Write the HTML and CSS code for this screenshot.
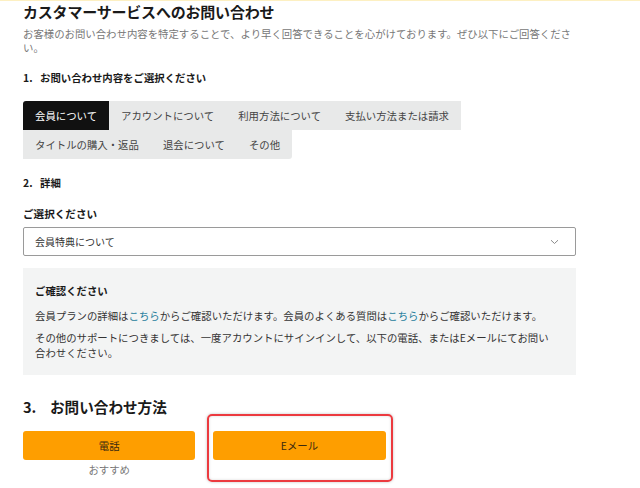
FILE: index.html
```html
<!DOCTYPE html>
<html lang="ja">
<head>
<meta charset="utf-8">
<title>カスタマーサービスへのお問い合わせ</title>
<link rel="stylesheet" href="styles.css">
</head>
<body>
<div class="topline"></div>
<main class="page">
  <h1 class="title">カスタマーサービスへのお問い合わせ</h1>
  <p class="lead">お客様のお問い合わせ内容を特定することで、より早く回答できることを心がけております。ぜひ以下にご回答ください。</p>

  <h2 class="step"><span class="num">1.</span>お問い合わせ内容をご選択ください</h2>
  <div class="chips">
    <span class="chip active">会員について</span>
    <span class="chip">アカウントについて</span>
    <span class="chip">利用方法について</span>
    <span class="chip">支払い方法または請求</span>
    <span class="chip">タイトルの購入・返品</span>
    <span class="chip">退会について</span>
    <span class="chip last">その他</span>
  </div>

  <h2 class="step step2"><span class="num">2.</span>詳細</h2>
  <div class="label">ご選択ください</div>
  <div class="select">
    <span>会員特典について</span>
    <svg class="chev" width="9" height="6" viewBox="0 0 9 6"><path d="M1 1.2 L4.5 4.5 L8 1.2" fill="none" stroke="#8a8a8a" stroke-width="1"/></svg>
  </div>

  <section class="notice">
    <div class="notice-title">ご確認ください</div>
    <p class="notice-p">会員プランの詳細は<a class="link">こちら</a>からご確認いただけます。会員のよくある質問は<a class="link">こちら</a>からご確認いただけます。</p>
    <p class="notice-p p2">その他のサポートにつきましては、一度アカウントにサインインして、以下の電話、またはEメールにてお問い合わせください。</p>
  </section>

  <h2 class="method"><span class="mnum">3.</span>お問い合わせ方法</h2>
  <div class="buttons">
    <div class="col">
      <div class="btn">電話</div>
      <div class="rec">おすすめ</div>
    </div>
    <div class="col highlighted">
      <div class="btn">Eメール</div>
      <div class="hl"></div>
    </div>
  </div>
</main>
</body>
</html>
```
FILE: styles.css
```css
* { box-sizing: border-box; }
html, body { margin: 0; padding: 0; background: #fff; }
body {
  font-family: "Noto Sans CJK JP", "Noto Sans", sans-serif;
  color: #222;
  width: 640px;
  height: 488px;
  overflow: hidden;
}
.topline { height: 1px; background: #fdf0c2; }
.page {
  width: 576px;
  padding-left: 23px;
}
.title {
  margin: 1px 0 0;
  font-size: 15px;
  line-height: 20px;
  font-weight: 700;
  color: #1a1a1a;
  letter-spacing: -0.2px;
}
.lead {
  margin: 5px 0 0;
  font-size: 10.4px;
  line-height: 14px;
  color: #777;
}
.step {
  margin: 16px 0 0;
  font-size: 10.4px;
  line-height: 14px;
  font-weight: 700;
  color: #1a1a1a;
  display: flex;
}
.step .num { width: 17px; }
.chips {
  display: flex;
  flex-wrap: wrap;
  width: 440px;
  margin-top: 16px;
}
.chip {
  background: #e8e9e9;
  color: #444;
  font-size: 10.4px;
  line-height: 13px;
  padding: 8px 12px;
  white-space: nowrap;
}
.chip.active {
  background: #111;
  color: #fff;
  border-radius: 3px 0 0 0;
}
.chip.last { border-radius: 0 0 3px 0; }
.step2 { margin-top: 17px; }
.label {
  margin-top: 17px;
  font-size: 10.6px;
  line-height: 14px;
  font-weight: 700;
  color: #1a1a1a;
}
.select {
  margin-top: 6px;
  width: 553px;
  height: 29px;
  border: 1px solid #9a9a9a;
  border-radius: 2px;
  display: flex;
  align-items: center;
  justify-content: space-between;
  padding: 0 16px 0 11px;
  font-size: 10px;
  color: #333;
}
.chev { margin-top: 1px; }
.notice {
  margin-top: 12px;
  width: 553px;
  background: #f3f4f4;
  padding: 16px 20px 15px 12px;
}
.notice-title {
  font-size: 10.4px;
  line-height: 14px;
  font-weight: 700;
  color: #1a1a1a;
}
.notice-p {
  margin: 10px 0 0;
  font-size: 10.4px;
  line-height: 15px;
  color: #333;
}
.notice-p.p2 { margin-top: 7px; }
.link { color: #1f7d9c; }
.method {
  margin: 22px 0 0;
  font-size: 14.6px;
  line-height: 20px;
  font-weight: 700;
  color: #1a1a1a;
  display: flex;
}
.mnum { width: 27px; }
.buttons {
  margin-top: 14px;
  width: 553px;
  display: grid;
  grid-template-columns: repeat(3, 1fr);
  column-gap: 18px;
  align-items: start;
}
.col { position: relative; }
.btn {
  height: 29px;
  background: #fe9e00;
  border-radius: 3px;
  display: flex;
  align-items: center;
  justify-content: center;
  font-size: 10.4px;
  color: #3a2a10;
}
.rec {
  margin-top: 3px;
  text-align: center;
  font-size: 10.4px;
  line-height: 14px;
  color: #777;
}
.hl {
  position: absolute;
  left: -6px;
  right: -7px;
  top: -17px;
  bottom: -22px;
  border: 2px solid #ec3a3f;
  border-radius: 5px;
  box-shadow: 0 0 3px rgba(0,0,0,0.25), inset 0 0 3px rgba(0,0,0,0.15);
  pointer-events: none;
}
```
